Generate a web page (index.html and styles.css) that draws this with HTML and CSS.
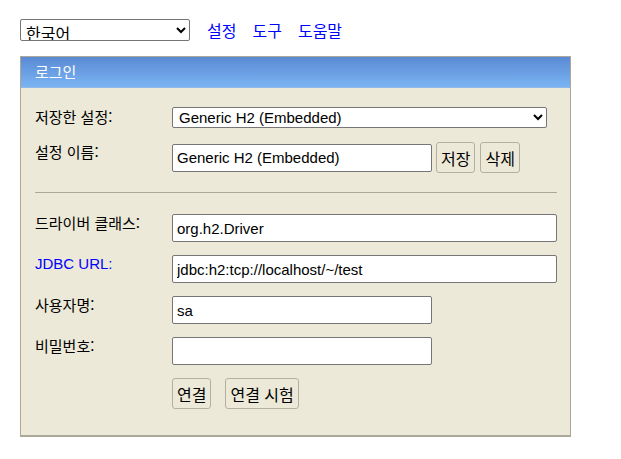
FILE: index.html
```html
<!DOCTYPE html>
<html lang="ko">
<head>
<meta charset="utf-8">
<title>H2 Console</title>
<link rel="stylesheet" href="styles.css">
</head>
<body>
<div class="topbar">
  <select class="lang">
    <option>한국어</option>
  </select>
  <nav class="links">
    <a href="#">설정</a>
    <a href="#">도구</a>
    <a href="#">도움말</a>
  </nav>
</div>

<div class="login">
  <div class="login-head">로그인</div>
  <div class="login-body">
    <div class="row row-saved">
      <span class="label">저장한 설정:</span>
      <select class="field field-saved">
        <option>Generic H2 (Embedded)</option>
      </select>
    </div>
    <div class="row row-name">
      <span class="label">설정 이름:</span>
      <div class="inline">
        <input class="field field-short" type="text" value="Generic H2 (Embedded)">
        <button class="btn">저장</button>
        <button class="btn btn-next">삭제</button>
      </div>
    </div>
    <hr class="sep">
    <div class="row">
      <span class="label">드라이버 클래스:</span>
      <input class="field field-long" type="text" value="org.h2.Driver">
    </div>
    <div class="row">
      <a class="label label-link" href="#">JDBC URL:</a>
      <input class="field field-long" type="text" value="jdbc:h2:tcp://localhost/~/test">
    </div>
    <div class="row">
      <span class="label">사용자명:</span>
      <input class="field field-short" type="text" value="sa">
    </div>
    <div class="row">
      <span class="label">비밀번호:</span>
      <input class="field field-short" type="password" value="">
    </div>
    <div class="row row-actions">
      <span class="label"></span>
      <div class="actions">
        <button class="btn">연결</button>
        <button class="btn">연결 시험</button>
      </div>
    </div>
  </div>
</div>
</body>
</html>
```
FILE: styles.css
```css
* { box-sizing: border-box; }

body {
  margin: 0;
  padding: 19px 20px;
  background: #ffffff;
  font-family: "Liberation Sans", Arial, "Noto Sans CJK KR", sans-serif;
  font-size: 15px;
  color: #000;
}

.topbar {
  display: flex;
  align-items: center;
  height: 22px;
}

.lang {
  width: 170px;
  height: 22px;
  font-family: "Noto Sans CJK KR", sans-serif;
  font-size: 16px;
  line-height: 20px;
  border: 1px solid #767676;
  border-radius: 2px;
  background: #fff;
  padding: 0 0 0 1px;
  color: #000;
}

.links {
  display: flex;
  gap: 16px;
  margin-left: 17px;
  margin-top: -1px;
}

.links a {
  color: #0000ff;
  text-decoration: none;
  font-family: "Noto Sans CJK KR", sans-serif;
  font-size: 16px;
}

.login {
  width: 551px;
  margin-top: 15px;
  background: #ece9d8;
  border: 1px solid #aca899;
  border-bottom-width: 2px;
}

.login-head {
  height: 31px;
  padding-left: 14px;
  line-height: 30px;
  color: #fff;
  font-family: "Noto Sans CJK KR", sans-serif;
  font-size: 15px;
  background: linear-gradient(#5a8ad4, #7ab4f2);
  border-bottom: 1px solid #8fb8e8;
}

.login-body {
  padding: 19px 13px 26px 14px;
}

.row {
  display: grid;
  grid-template-columns: 137px auto;
  justify-content: start;
  align-items: start;
  margin-bottom: 13px;
}

.row-saved { margin-bottom: 14px; align-items: center; }
.row-name { margin-bottom: 0; }

.label {
  font-family: "Noto Sans CJK KR", sans-serif;
  font-size: 15px;
  line-height: 20px;
  margin-top: -1px;
  color: #000;
}

.row-saved .label { margin-top: -1px; }
.row-name .label { margin-top: 0; }

.label-link {
  color: #0000ff;
  text-decoration: none;
  font-family: "Liberation Sans", sans-serif;
  font-size: 15px;
}

.field {
  font-family: "Liberation Sans", Arial, sans-serif;
  font-size: 15px;
  color: #000;
  background: #fff;
  border: 1px solid #767676;
  border-radius: 2px;
  height: 28px;
  padding: 0 4px;
}

.field-saved {
  width: 375px;
  height: 21px;
  padding: 0 2px;
}

.field-short { width: 260px; }
.field-long { width: 385px; }

.inline {
  display: flex;
  align-items: center;
  gap: 4px;
}

.btn {
  height: 31px;
  padding: 0 4px;
  font-family: "Noto Sans CJK KR", sans-serif;
  font-size: 16px;
  color: #000;
  background: #ece9d8;
  border: 1px solid #b4b0a0;
  border-radius: 3px;
}

.inline .btn-next { margin-left: 1px; }

.sep {
  border: 0;
  border-top: 1px solid #aca899;
  height: 0;
  margin: 19px 0 21px 0;
  width: 522px;
}

.row-actions { margin-top: 13px; margin-bottom: 0; }

.actions {
  display: flex;
  gap: 14px;
}
```
